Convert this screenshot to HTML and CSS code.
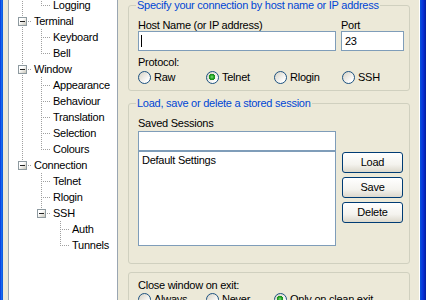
FILE: index.html
```html
<!DOCTYPE html>
<html lang="en">

<head>
  <meta charset="UTF-8">
  <meta name="viewport" content="width=device-width, initial-scale=1.0">
  <title>PuTTY Configuration</title>
  <link rel="stylesheet" href="styles.css">
</head>

<body>
  <div class="window">
    <div class="frame-left"></div>

    <div class="client">
      <ul class="tree">
        <li class="row"><span class="g g-line"></span><span class="g g-last"></span><span class="label">Logging</span></li>
        <li class="row"><span class="g g-box"><span class="box"></span></span><span class="label">Terminal</span></li>
        <li class="row"><span class="g g-line"></span><span class="g g-tee"></span><span class="label">Keyboard</span></li>
        <li class="row"><span class="g g-line"></span><span class="g g-last"></span><span class="label">Bell</span></li>
        <li class="row"><span class="g g-box"><span class="box"></span></span><span class="label">Window</span></li>
        <li class="row"><span class="g g-line"></span><span class="g g-tee"></span><span class="label">Appearance</span></li>
        <li class="row"><span class="g g-line"></span><span class="g g-tee"></span><span class="label">Behaviour</span></li>
        <li class="row"><span class="g g-line"></span><span class="g g-tee"></span><span class="label">Translation</span></li>
        <li class="row"><span class="g g-line"></span><span class="g g-tee"></span><span class="label">Selection</span></li>
        <li class="row"><span class="g g-line"></span><span class="g g-last"></span><span class="label">Colours</span></li>
        <li class="row"><span class="g g-box-last"><span class="box"></span></span><span class="label">Connection</span></li>
        <li class="row"><span class="g"></span><span class="g g-tee"></span><span class="label">Telnet</span></li>
        <li class="row"><span class="g"></span><span class="g g-tee"></span><span class="label">Rlogin</span></li>
        <li class="row"><span class="g"></span><span class="g g-box-last"><span class="box"></span></span><span class="label">SSH</span></li>
        <li class="row"><span class="g"></span><span class="g"></span><span class="g g-tee"></span><span class="label">Auth</span></li>
        <li class="row"><span class="g"></span><span class="g"></span><span class="g g-last"></span><span class="label">Tunnels</span></li>
      </ul>

      <div class="panel">
        <div class="group group-host">
          <div class="caption">Specify your connection by host name or IP address</div>
          <div class="host-row">
            <div class="field">
              <div class="field-label">Host Name (or IP address)</div>
              <div class="edit"><span class="caret"></span></div>
            </div>
            <div class="field">
              <div class="field-label">Port</div>
              <div class="edit">23</div>
            </div>
          </div>
          <div class="text-label">Protocol:</div>
          <div class="radios">
            <div class="radio"><span class="dot"></span>Raw</div>
            <div class="radio"><span class="dot checked"></span>Telnet</div>
            <div class="radio"><span class="dot"></span>Rlogin</div>
            <div class="radio"><span class="dot"></span>SSH</div>
          </div>
        </div>

        <div class="group group-sessions">
          <div class="caption">Load, save or delete a stored session</div>
          <div class="field-label sessions-label">Saved Sessions</div>
          <div class="edit session-name"></div>
          <div class="sessions-row">
            <div class="listbox">
              <div class="list-item">Default Settings</div>
            </div>
            <div class="buttons">
              <div class="button">Load</div>
              <div class="button">Save</div>
              <div class="button">Delete</div>
            </div>
          </div>
        </div>

        <div class="group group-exit">
          <div class="text-label">Close window on exit:</div>
          <div class="radios exit-radios">
            <div class="radio"><span class="dot"></span>Always</div>
            <div class="radio"><span class="dot"></span>Never</div>
            <div class="radio"><span class="dot checked"></span>Only on clean exit</div>
          </div>
        </div>
      </div>
    </div>

    <div class="frame-right"></div>
  </div>
</body>

</html>
```

FILE: styles.css
```css
* {
  box-sizing: border-box;
  margin: 0;
  padding: 0;
}

body {
  height: 300px;
  overflow: hidden;
  background: #ece9d8;
  color: #000;
  font-family: "Liberation Sans", Arial, sans-serif;
  font-size: 11px;
  letter-spacing: -0.25px;
}

.window {
  display: flex;
  height: 300px;
}

.frame-left {
  flex: none;
  width: 3px;
  background: linear-gradient(to right, #0831d9, #166aee 50%, #0855dd);
}

.frame-right {
  flex: none;
  width: 7px;
  background: linear-gradient(to right, #fff 0 1px, #0855dd 1px, #0831d9 4px, #001ea0);
}

.client {
  flex: 1;
  display: flex;
  align-items: flex-start;
  padding-left: 5px;
  overflow: hidden;
}

/* tree view */

.tree {
  flex: none;
  width: 110px;
  height: 320px;
  margin-top: -4px;
  padding-left: 4px;
  list-style: none;
  background: #fff;
  border: 1px solid #9aa6b2;
}

.row {
  display: flex;
  height: 16px;
  line-height: 16px;
  white-space: nowrap;
}

.g {
  flex: none;
  width: 19px;
  height: 16px;
}

.g-line {
  background: repeating-linear-gradient(#a0a0a0 0 1px, transparent 1px 2px) 9px 0 / 1px 16px no-repeat;
}

.g-tee,
.g-box {
  background:
    repeating-linear-gradient(to right, #a0a0a0 0 1px, transparent 1px 2px) 11px 8px / 8px 1px no-repeat,
    repeating-linear-gradient(#a0a0a0 0 1px, transparent 1px 2px) 9px 0 / 1px 16px no-repeat;
}

.g-last,
.g-box-last {
  background:
    repeating-linear-gradient(to right, #a0a0a0 0 1px, transparent 1px 2px) 11px 8px / 8px 1px no-repeat,
    repeating-linear-gradient(#a0a0a0 0 1px, transparent 1px 2px) 9px 0 / 1px 9px no-repeat;
}

.box {
  display: block;
  width: 9px;
  height: 9px;
  margin: 4px 0 0 5px;
  border: 1px solid #8e9aa0;
  background:
    linear-gradient(#222, #222) center / 5px 1px no-repeat,
    linear-gradient(135deg, #fff 35%, #c8c5b8);
}

.label {
  margin-left: 2px;
}

/* right hand panel */

.panel {
  flex: none;
  width: 282px;
  margin-left: 10px;
}

.group {
  border: 1px solid #d0d0bf;
  border-radius: 3px;
  padding: 0 4px 6px 9px;
}

.group-host {
  margin-top: 5px;
}

.group-sessions {
  margin-top: 12px;
  padding-bottom: 17px;
}

.group-exit {
  margin-top: 8px;
  padding-top: 6px;
}

.caption {
  width: fit-content;
  margin: -7px 0 0 -2px;
  padding: 0 1px;
  background: #ece9d8;
  color: #0046d5;
  line-height: 13px;
}

.host-row {
  display: grid;
  grid-template-columns: 198px 63px;
  column-gap: 5px;
  margin-top: 7px;
}

.field-label {
  line-height: 12px;
}

.edit {
  height: 20px;
  padding: 0 3px;
  line-height: 18px;
  background: #fff;
  border: 1px solid #7f9db9;
}

.caret {
  display: block;
  width: 1px;
  height: 12px;
  margin: 3px 0 0 -1px;
  background: #000;
}

.text-label {
  line-height: 13px;
}

.group-host .text-label {
  margin-top: 5px;
}

.radios {
  display: grid;
  grid-template-columns: repeat(3, 68px) auto;
  margin-top: 2px;
  line-height: 13px;
}

.exit-radios {
  margin-top: 1px;
}

.radio {
  display: flex;
  align-items: center;
  gap: 3px;
  white-space: nowrap;
}

.dot {
  flex: none;
  width: 13px;
  height: 13px;
  border-radius: 50%;
  border: 1px solid #1c5180;
  background: linear-gradient(135deg, #d6d2c5, #fff 80%);
}

.dot.checked {
  background:
    radial-gradient(circle at 45% 45%, #7fe07f 0, #21a121 2px, #1a8d1a 3px, transparent 3.5px),
    linear-gradient(135deg, #d6d2c5, #fff 80%);
}

.sessions-label {
  margin-top: 7px;
}

.session-name {
  width: 198px;
  margin-top: 2px;
}

.sessions-row {
  display: flex;
  gap: 6px;
}

.listbox {
  width: 198px;
  height: 95px;
  padding: 2px 3px;
  background: #fff;
  border: 1px solid #7f9db9;
}

.list-item {
  line-height: 13px;
}

.buttons {
  display: flex;
  flex-direction: column;
  gap: 4px;
  margin-top: 1px;
}

.button {
  width: 61px;
  height: 21px;
  line-height: 19px;
  text-align: center;
  border: 1px solid #003c74;
  border-radius: 3px;
  background: linear-gradient(#fff, #f4f3ee 60%, #dcd8cc);
}
```
